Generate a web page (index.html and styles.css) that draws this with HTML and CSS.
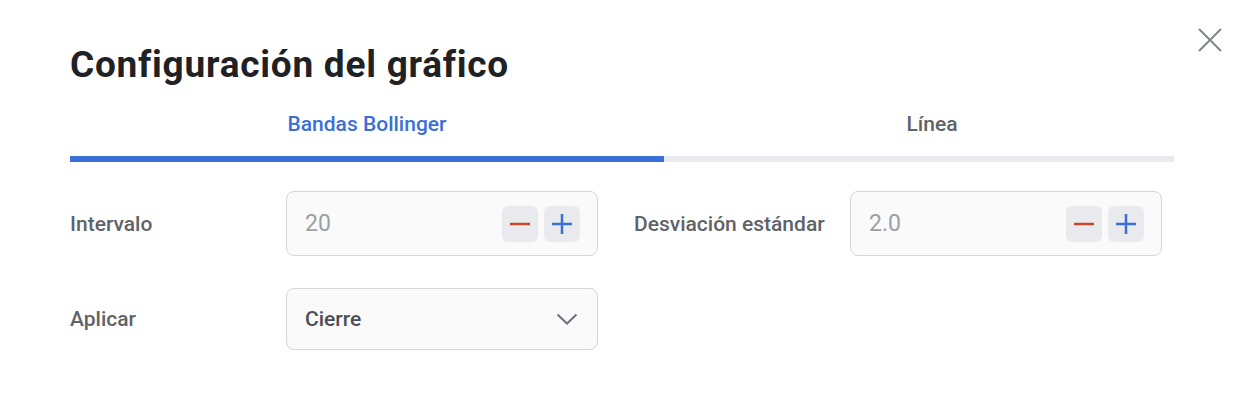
FILE: index.html
```html
<!DOCTYPE html>
<html lang="es">
<head>
<meta charset="utf-8">
<link rel="stylesheet" href="styles.css">
</head>
<body>
<div class="dialog">
  <button class="close" aria-label="Cerrar">
    <svg width="26" height="26" viewBox="0 0 26 26"><path d="M2 2 L24 24 M24 2 L2 24" stroke="#80868b" stroke-width="2" fill="none"/></svg>
  </button>
  <h1 class="title">Configuración del gráfico</h1>
  <div class="tabs">
    <div class="tab active">Bandas Bollinger</div>
    <div class="tab">Línea</div>
  </div>
  <div class="form">
    <div class="row">
      <div class="field">
        <label class="label">Intervalo</label>
        <div class="box stepper">
          <span class="value">20</span>
          <div class="btns">
            <span class="btn"><svg width="20" height="20" viewBox="0 0 20 20"><path d="M0 10 H20" stroke="#c9482b" stroke-width="2.5"/></svg></span>
            <span class="btn"><svg width="20" height="20" viewBox="0 0 20 20"><path d="M0 10 H20 M10 0 V20" stroke="#3b6fd8" stroke-width="2.5"/></svg></span>
          </div>
        </div>
      </div>
      <div class="field">
        <label class="label">Desviación estándar</label>
        <div class="box stepper">
          <span class="value">2.0</span>
          <div class="btns">
            <span class="btn"><svg width="20" height="20" viewBox="0 0 20 20"><path d="M0 10 H20" stroke="#c9482b" stroke-width="2.5"/></svg></span>
            <span class="btn"><svg width="20" height="20" viewBox="0 0 20 20"><path d="M0 10 H20 M10 0 V20" stroke="#3b6fd8" stroke-width="2.5"/></svg></span>
          </div>
        </div>
      </div>
    </div>
    <div class="row">
      <div class="field">
        <label class="label">Aplicar</label>
        <div class="box select">
          <span class="sel-value">Cierre</span>
          <svg width="22" height="12" viewBox="0 0 22 12"><path d="M1.5 1.5 L11 10.5 L20.5 1.5" stroke="#6b7280" stroke-width="2" fill="none"/></svg>
        </div>
      </div>
    </div>
  </div>
</div>
</body>
</html>
```
FILE: styles.css
```css
* { box-sizing: border-box; }
html, body { margin: 0; padding: 0; background: #ffffff; }
body { font-family: Roboto, "Noto Sans", sans-serif; }

.dialog {
  position: relative;
  width: 1246px;
  height: 414px;
  padding: 40px 72px 0 70px;
}

.close {
  position: absolute;
  top: 26px;
  right: 22px;
  width: 28px;
  height: 28px;
  padding: 1px;
  border: 0;
  background: none;
  display: flex;
  align-items: center;
  justify-content: center;
}

.title {
  margin: 0;
  font-size: 37px;
  line-height: 50px;
  font-weight: 700;
  color: #202124;
  letter-spacing: 0.75px;
}

.tabs {
  margin-top: 22px;
  display: grid;
  grid-template-columns: 594fr 510fr;
  width: 1104px;
}
.tab {
  text-align: center;
  font-size: 21px;
  font-weight: 500;
  line-height: 24px;
  color: #5f6368;
  padding-bottom: 20px;
  border-bottom: 6px solid #e8eaed;
}
.tab + .tab { padding-left: 26px; }
.tab.active {
  color: #3b6fd8;
  border-bottom-color: #3b6fd8;
}

.form {
  margin-top: 29px;
  display: flex;
  flex-direction: column;
  gap: 32px;
}
.row {
  display: flex;
  gap: 36px;
}
.field {
  display: flex;
  align-items: center;
}
.label {
  width: 216px;
  font-size: 21px;
  font-weight: 500;
  color: #5f6368;
}

.box {
  width: 312px;
  background: #fafafa;
  border: 1px solid #d3d5d9;
  border-radius: 8px;
  display: flex;
  align-items: center;
  justify-content: space-between;
}
.stepper {
  height: 65px;
  padding: 0 17px 0 18px;
}
.value {
  font-size: 23px;
  color: #9aa0a6;
}
.btns { display: flex; gap: 6px; }
.btn {
  width: 36px;
  height: 36px;
  border-radius: 6px;
  background: #e8eaed;
  display: flex;
  align-items: center;
  justify-content: center;
}

.select {
  height: 62px;
  padding: 0 19px 0 18px;
}
.sel-value {
  font-size: 21px;
  font-weight: 500;
  color: #4a4f57;
}
```
